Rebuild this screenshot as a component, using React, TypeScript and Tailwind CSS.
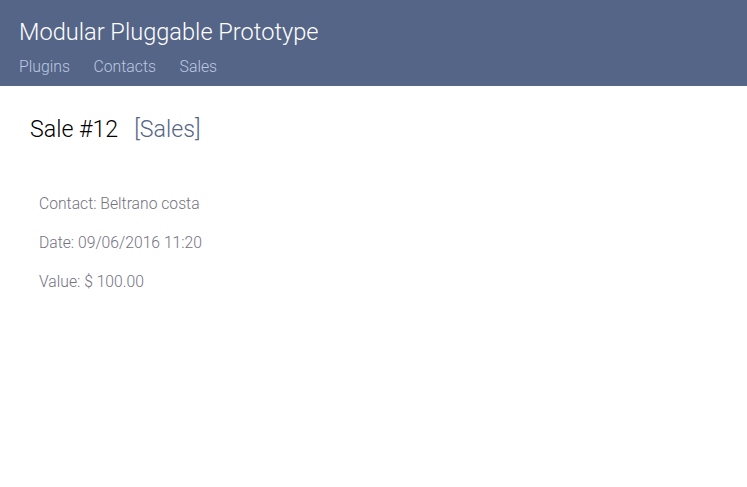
import { FC } from "react";

const navLinks = ["Plugins", "Contacts", "Sales"];

const details = [
  { label: "Contact", value: "Beltrano costa" },
  { label: "Date", value: "09/06/2016 11:20" },
  { label: "Value", value: "$ 100.00" },
];

const App: FC = () => {
  return (
    <div
      className="min-h-screen bg-white font-light"
      style={{ fontFamily: "Roboto, 'Liberation Sans', sans-serif" }}
    >
      <header className="h-[86px] bg-[#556587] px-[19px] pt-[17px]">
        <h1 className="text-[23.6px] leading-[30px] text-white">Modular Pluggable Prototype</h1>
        <nav className="mt-[10px] flex gap-[23.5px] text-[15.8px] leading-[20px] text-[#bcc8e0]">
          {navLinks.map((link) => (
            <a key={link} href="#" className="cursor-pointer">
              {link}
            </a>
          ))}
        </nav>
      </header>

      <main className="px-[30px] pt-[28px]">
        <h2 className="flex items-baseline gap-[16px] text-[23.2px] leading-[30px] text-black">
          Sale #12
          <a href="#" className="text-[#556587]">[Sales]</a>
        </h2>

        <ul className="mt-[50px] flex flex-col gap-[20px] pl-[9px] text-[15.7px] leading-[19px] text-[#74727f]">
          {details.map((d) => (
            <li key={d.label}>
              {d.label}: {d.value}
            </li>
          ))}
        </ul>
      </main>
    </div>
  );
};

export default App;
